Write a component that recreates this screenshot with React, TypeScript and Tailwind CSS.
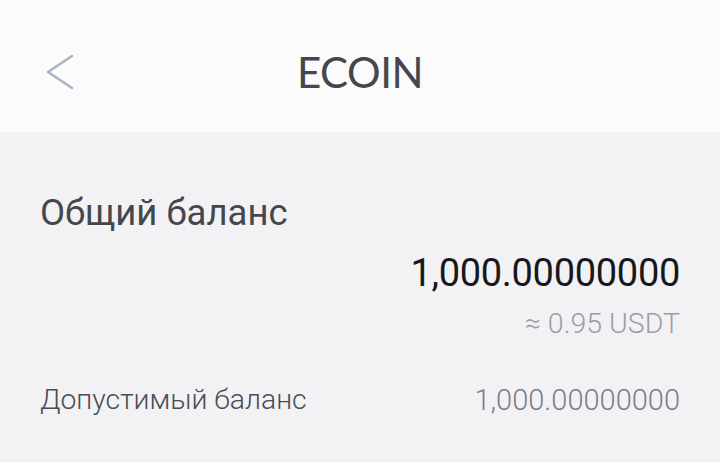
import React from "react";

export default function App() {
  return (
    <div className="w-[720px] h-[462px] overflow-hidden bg-[#f2f2f4] flex flex-col" style={{ fontFamily: "Roboto, 'Noto Sans', sans-serif" }}>
      <div className="h-[132px] bg-[#fbfbfb] relative flex items-center justify-center shrink-0">
        <svg className="absolute left-[44px] top-[53px]" width="32" height="38" viewBox="0 0 32 38" fill="none">
          <path d="M28 3 L4 19 L28 35" stroke="#aab3c5" strokeWidth="2.6" strokeLinecap="round" strokeLinejoin="round" />
        </svg>
        <span className="mt-[12px] text-[42px] text-[#45474d] tracking-[-0.5px]" style={{ fontFamily: "Lato, sans-serif" }}>ECOIN</span>
      </div>
      <div className="flex flex-col px-[40px]">
        <div className="mt-[63px] text-[36.5px] leading-none text-[#45474d]">Общий баланс</div>
        <div className="mt-[22px] self-end text-[38px] leading-none text-[#17181b] tracking-[-0.3px]">1,000.00000000</div>
        <div className="mt-[18px] self-end text-[28.5px] leading-none text-[#9b9da7] font-light">≈ 0.95 USDT</div>
        <div className="mt-[48px] flex justify-between items-center">
          <span className="text-[28.3px] leading-none text-[#4a4c54] font-light">Допустимый баланс</span>
          <span className="text-[29px] leading-none text-[#7b7f8d] font-light">1,000.00000000</span>
        </div>
      </div>
    </div>
  );
}
